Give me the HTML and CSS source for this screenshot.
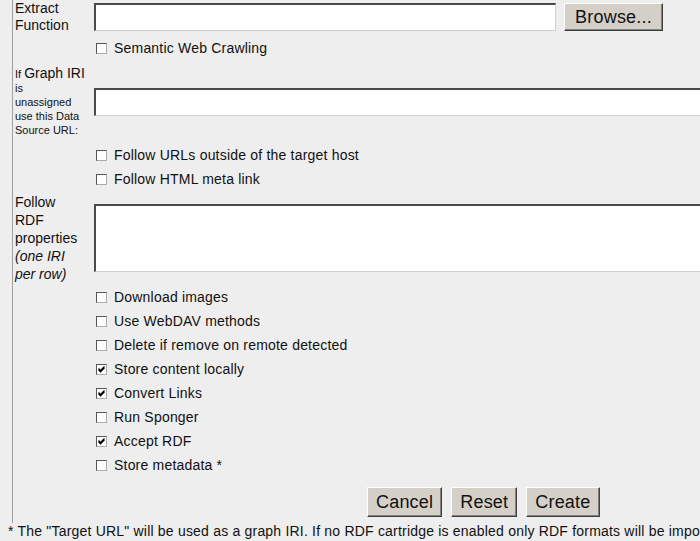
FILE: index.html
```html
<!DOCTYPE html>
<html>
<head>
<meta charset="utf-8">
<title>Crawler form</title>
<link rel="stylesheet" href="styles.css">
</head>
<body>
<div class="page">
  <div class="form">
    <div class="label two">Extract<br>Function</div>
    <div class="field">
      <span class="text w1"></span>
      <button class="btn browse" type="button">Browse...</button>
    </div>

    <div></div>
    <div class="field"><label class="cb"><span class="box"></span>Semantic Web Crawling</label></div>

    <div class="label small">If <span class="big">Graph IRI</span><br>is<br>unassigned<br>use this Data<br>Source URL:</div>
    <div class="field"><span class="text w2"></span></div>

    <div></div>
    <div class="field"><label class="cb"><span class="box"></span>Follow URLs outside of the target host</label></div>

    <div></div>
    <div class="field"><label class="cb"><span class="box"></span>Follow HTML meta link</label></div>

    <div class="label five">Follow<br>RDF<br>properties<br><i>(one IRI<br>per row)</i></div>
    <div class="field"><span class="area"></span></div>

    <div></div>
    <div class="field"><label class="cb"><span class="box"></span>Download images</label></div>
    <div></div>
    <div class="field"><label class="cb"><span class="box"></span>Use WebDAV methods</label></div>
    <div></div>
    <div class="field"><label class="cb"><span class="box"></span>Delete if remove on remote detected</label></div>
    <div></div>
    <div class="field"><label class="cb"><span class="box"><svg viewBox="0 0 9 9" width="9" height="9"><path d="M1.5 3.5 L3.5 5.5 L7.5 1.5 M1.5 4.8 L3.5 6.8 L7.5 2.8" stroke="#000" stroke-width="1.2" fill="none"/></svg></span>Store content locally</label></div>
    <div></div>
    <div class="field"><label class="cb"><span class="box"><svg viewBox="0 0 9 9" width="9" height="9"><path d="M1.5 3.5 L3.5 5.5 L7.5 1.5 M1.5 4.8 L3.5 6.8 L7.5 2.8" stroke="#000" stroke-width="1.2" fill="none"/></svg></span>Convert Links</label></div>
    <div></div>
    <div class="field"><label class="cb"><span class="box"></span>Run Sponger</label></div>
    <div></div>
    <div class="field"><label class="cb"><span class="box"><svg viewBox="0 0 9 9" width="9" height="9"><path d="M1.5 3.5 L3.5 5.5 L7.5 1.5 M1.5 4.8 L3.5 6.8 L7.5 2.8" stroke="#000" stroke-width="1.2" fill="none"/></svg></span>Accept RDF</label></div>
    <div></div>
    <div class="field"><label class="cb"><span class="box"></span>Store metadata *</label></div>

    <div></div>
    <div class="buttons">
      <button class="btn" type="button">Cancel</button>
      <button class="btn" type="button">Reset</button>
      <button class="btn" type="button">Create</button>
    </div>
  </div>
  <p class="note">* The "Target URL" will be used as a graph IRI. If no RDF cartridge is enabled only RDF formats will be imported.</p>
</div>
</body>
</html>
```
FILE: styles.css
```css
html, body {
  margin: 0;
  padding: 0;
  overflow: hidden;
  background: #eeeeee;
}
body {
  font-family: "Liberation Sans", Arial, sans-serif;
  font-size: 14px;
  letter-spacing: 0.2px;
  color: #111;
}
.page {
  width: 1000px;
}
.form {
  margin-left: 12px;
  border-left: 1px solid #a0a0a0;
  padding-left: 2px;
  display: grid;
  grid-template-columns: 79px 1fr;
  row-gap: 4px;
  align-items: center;
}
.label {
  line-height: 17px;
  letter-spacing: 0;
}
.label.small {
  font-size: 11px;
  line-height: 14px;
  padding: 3px 0 4px;
}
.label.small .big {
  font-size: 14px;
  line-height: 16px;
}
.label.five {
  line-height: 18px;
}
.field {
  display: flex;
  align-items: center;
  min-height: 20px;
}
.text, .area {
  display: block;
  background: #fff;
  box-sizing: border-box;
  border-top: 2px solid #4a4a4a;
  border-left: 2px solid #4a4a4a;
  border-right: 1px solid #d4d0c8;
  border-bottom: 1px solid #d4d0c8;
}
.text {
  height: 28px;
}
.w1 { width: 462px; }
.w2 { width: 700px; }
.area { width: 700px; height: 68px; }
.btn {
  font-family: "Liberation Sans", Arial, sans-serif;
  font-size: 18px;
  letter-spacing: 0.2px;
  color: #111;
  background: #d4d0c8;
  border-top: 1px solid #fff;
  border-left: 1px solid #fff;
  border-right: 1px solid #404040;
  border-bottom: 1px solid #404040;
  box-shadow: inset -1px -1px 0 #808080;
  padding: 0 8px;
  height: 28px;
  margin: 0;
  line-height: 24px;
}
.browse {
  margin-left: 8px;
  width: 99px;
  padding: 0;
}
.cb {
  display: flex;
  align-items: center;
  margin-left: 2px;
}
.box {
  box-sizing: border-box;
  width: 11px;
  height: 11px;
  background: #fff;
  border-top: 1px solid #555;
  border-left: 1px solid #555;
  border-right: 1px solid #aaa;
  border-bottom: 1px solid #aaa;
  margin-right: 7px;
  display: flex;
  align-items: center;
  justify-content: center;
}
.box svg { display: block; }
.buttons {
  display: flex;
  gap: 9px;
  padding: 8px 0 6px 273px;
}
.buttons .btn {
  height: 30px;
}
.note {
  margin: 0;
  padding-left: 8px;
  line-height: 17px;
  white-space: nowrap;
}
```
